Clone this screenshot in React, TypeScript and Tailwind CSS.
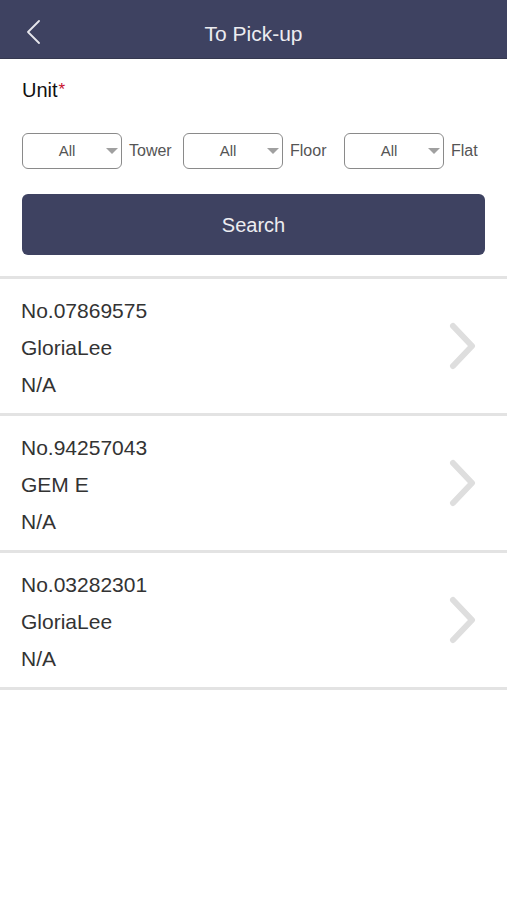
import React from "react";

const items = [
  { no: "No.07869575", name: "GloriaLee", unit: "N/A" },
  { no: "No.94257043", name: "GEM E", unit: "N/A" },
  { no: "No.03282301", name: "GloriaLee", unit: "N/A" },
];

function Select({ label }: { label: string }) {
  return (
    <div className="flex w-[161px] shrink-0 items-center">
      <div className="relative flex h-[36px] w-[100px] items-center rounded-[6px] border-[1.5px] border-[#8a8a8a] bg-white">
        <span className="w-[88px] text-center text-[15px] text-[#555]">All</span>
        <svg width="12" height="7" viewBox="0 0 12 7" className="absolute left-[83px] top-[14px]">
          <polygon points="0,0 12,0 6,6" fill="#a0a0a0" />
        </svg>
      </div>
      <span className="ml-[7px] text-[16px] text-[#555]">{label}</span>
    </div>
  );
}

export default function App() {
  return (
    <div
      className="min-h-[900px] w-[507px] bg-white"
      style={{ fontFamily: '"Liberation Sans", Arial, sans-serif' }}
    >
      <div className="relative flex h-[59px] items-center justify-center border-b border-[#35384f] bg-[#3e4261] pt-[8px]">
        <svg
          width="16"
          height="24"
          viewBox="0 0 16 24"
          className="absolute left-[25px] top-[20px]"
        >
          <polyline
            points="14,1 3,12 14,23"
            fill="none"
            stroke="#e6e6ec"
            strokeWidth="1.8"
            strokeLinecap="round"
            strokeLinejoin="round"
          />
        </svg>
        <span className="text-[21px] leading-none text-[#ececf0]">To Pick-up</span>
      </div>

      <div className="px-[22px] pt-[20px]">
        <div className="flex h-[22px] items-center text-[20px] leading-[22px] text-[#111]">
          <span>Unit</span>
          <span className="relative top-[-1px] ml-[1px] text-[17px] leading-none text-[#c8102e]">*</span>
        </div>
      </div>

      <div className="mt-[32px] flex pl-[22px]">
        <Select label="Tower" />
        <Select label="Floor" />
        <Select label="Flat" />
      </div>

      <div className="px-[22px] pt-[25px]">
        <button className="flex h-[61px] w-full items-center justify-center rounded-[6px] bg-[#3e4261] text-[20px] text-[#ececf0]">
          Search
        </button>
      </div>

      <div className="mt-[21px] h-[3px] bg-[#e3e3e3]" />

      {items.map((it) => (
        <div key={it.no}>
          <div className="flex h-[134px] items-center pl-[21px] pr-[31px]">
            <div className="flex-1 pt-[2px] text-[21px] leading-[37px] text-[#333]">
              <div>{it.no}</div>
              <div>{it.name}</div>
              <div>{it.unit}</div>
            </div>
            <svg width="28" height="48" viewBox="0 0 28 48">
              <polyline
                points="5,4 24,24 5,44"
                fill="none"
                stroke="#dedede"
                strokeWidth="6"
                strokeLinecap="round"
                strokeLinejoin="round"
              />
            </svg>
          </div>
          <div className="h-[3px] bg-[#e3e3e3]" />
        </div>
      ))}
    </div>
  );
}
